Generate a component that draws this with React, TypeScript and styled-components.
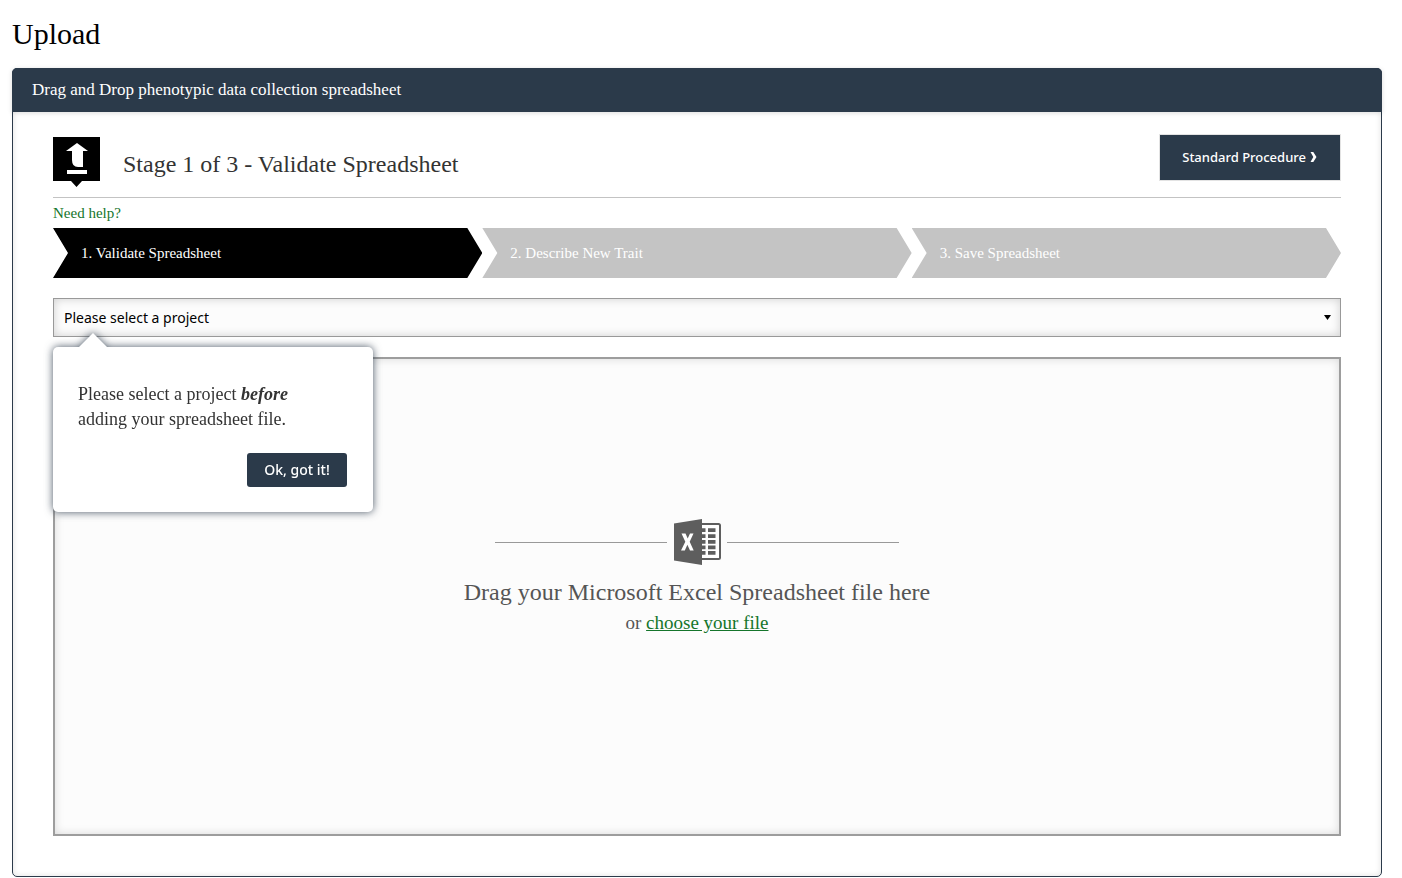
import React, { useState } from "react";
import styled, { createGlobalStyle } from "styled-components";

const serif = `"Liberation Serif", "Times New Roman", serif`;
const sans = `"Noto Sans", "Open Sans", sans-serif`;
const navy = "#2b3a4a";
const green = "#15752b";

const GlobalStyle = createGlobalStyle`
  *, *::before, *::after { box-sizing: border-box; }
  body {
    margin: 0;
    background: #fff;
    color: #333;
    font-family: ${serif};
    font-size: 18px;
    line-height: 24px;
  }
`;

const Page = styled.main`
  padding: 16px 20px 1px 12px;
`;

const Title = styled.h1`
  margin: 0 0 16px;
  color: #000;
  font-size: 30px;
  font-weight: 400;
  line-height: 36px;
`;

const Panel = styled.section`
  border: 1px solid ${navy};
  border-radius: 5px;
  box-shadow: inset 0 0 6px rgba(0, 0, 0, 0.12);
`;

const PanelTitle = styled.h2`
  margin: -1px -1px 0;
  padding: 10px 20px;
  border-radius: 5px 5px 0 0;
  background: ${navy};
  box-shadow: 0 1px 5px rgba(0, 0, 0, 0.14);
  color: #fff;
  font-size: 17px;
  font-weight: 400;
  line-height: 24px;
`;

const PanelBody = styled.div`
  padding: 22px 40px 40px;
`;

const StageHeader = styled.header`
  display: flex;
  align-items: flex-start;
  justify-content: space-between;
  height: 64px;
  border-bottom: 1px solid #c3c3c3;
`;

const StageName = styled.div`
  display: flex;
  gap: 23px;
  padding-top: 3px;
`;

const StageTitle = styled.h3`
  margin: 12px 0 0;
  font-size: 24px;
  font-weight: 400;
  line-height: 30px;
`;

const ProcedureButton = styled.button`
  display: flex;
  align-items: center;
  gap: 4px;
  height: 47px;
  padding: 0 23px 2px 22px;
  border: 1px solid #e3e3e3;
  background: ${navy};
  color: #fff;
  font: 500 13px/20px ${sans};
`;

const HelpLink = styled.a`
  display: block;
  width: fit-content;
  padding: 3px 0;
  color: ${green};
  font-size: 15px;
  text-decoration: none;
`;

const Steps = styled.ol`
  display: grid;
  grid-template-columns: repeat(3, 1fr);
  margin: 0 0 20px;
  padding: 0;
  list-style: none;
`;

const Step = styled.li<{ $current?: boolean }>`
  padding: 13px 28px;
  background: ${(p) => (p.$current ? "#000" : "#c4c4c4")};
  clip-path: polygon(0 0, calc(100% - 15px) 0, 100% 50%, calc(100% - 15px) 100%, 0 100%, 15px 50%);
  color: #fff;
  font-size: 15px;
`;

const ProjectField = styled.div`
  display: grid;
  position: relative;
  margin-bottom: 20px;
`;

const ProjectSelect = styled.select`
  appearance: none;
  grid-area: 1 / 1;
  height: 39px;
  padding: 0 30px 0 10px;
  border: 1px solid #999;
  border-radius: 0;
  background: #fcfcfc;
  box-shadow: inset 0 0 10px rgba(0, 0, 0, 0.18);
  color: #000;
  font: 400 14px/20px ${sans};
`;

const SelectArrow = styled.svg`
  grid-area: 1 / 1;
  place-self: center end;
  margin-right: 10px;
  pointer-events: none;
`;

const Tip = styled.div`
  position: absolute;
  top: 49px;
  left: 0;
  z-index: 1;
  width: 320px;
  padding: 35px 26px 25px 25px;
  border-radius: 5px;
  background: #fff;
  filter: drop-shadow(0 0 4px rgba(43, 58, 74, 0.85));

  &::before {
    content: "";
    position: absolute;
    bottom: 100%;
    left: 26px;
    border: 14px solid transparent;
    border-top: 0;
    border-bottom-color: #fff;
  }
`;

const TipText = styled.p`
  margin: 0 0 21px;
  font-size: 18px;
  line-height: 25px;
`;

const Emphasis = styled.em`
  font-weight: 700;
`;

const TipButton = styled.button`
  display: block;
  min-width: 100px;
  height: 34px;
  margin-left: auto;
  padding: 0 16px;
  border: 0;
  border-radius: 3px;
  background: ${navy};
  color: #fff;
  font: 500 14px/20px ${sans};
`;

const DropZone = styled.div`
  display: flex;
  flex-direction: column;
  align-items: center;
  padding: 160px 20px 199px;
  border: 2px solid #9d9d9d;
  background: #fcfcfc;
  box-shadow: inset 0 0 10px rgba(0, 0, 0, 0.14);
  color: #555;
`;

const IconRule = styled.div`
  display: flex;
  align-items: center;
  gap: 6px;
  margin-bottom: 11px;

  &::before,
  &::after {
    content: "";
    width: 172px;
    border-top: 1px solid #999;
  }
`;

const DropTitle = styled.p`
  margin: 0;
  font-size: 24px;
  line-height: 30px;
`;

const DropHint = styled.p`
  margin: 4px 0 0;
  font-size: 19px;
`;

const FileLink = styled.a`
  color: ${green};
`;

const UploadIcon = () => (
  <svg width="47" height="50" viewBox="0 0 47 50" aria-hidden="true">
    <path d="M0 0H47V44H29L23.500 50L18 44H0Z" fill="#000" />
    <path d="M24 6L35 14H30V30H25Q19 30 19 23V14H13Z" fill="#fff" />
    <path d="M14 33H34V37H14Z" fill="#fff" />
  </svg>
);

const Chevron = () => (
  <svg width="7" height="10" viewBox="0 0 7 10" aria-hidden="true">
    <path d="M0.500 0H3.300L6.500 5L3.300 10H0.500L3.300 5Z" fill="#fff" />
  </svg>
);

const SpreadsheetIcon = () => (
  <svg width="48" height="47" viewBox="0 0 48 47" aria-hidden="true">
    <rect x="24" y="5" width="23" height="35" rx="1.500" fill="#fff" stroke="#5e5e5e" strokeWidth="2" />
    <path
      d="M28 9.300h4.500v3.700h-4.500zM35 9.300h7.500v3.700h-7.500zM28 15.300h4.500v3.700h-4.500zM35 15.300h7.500v3.700h-7.500zM28 21h4.500v3.700h-4.500zM35 21h7.500v3.700h-7.500zM28 26.500h4.500v3.700h-4.500zM35 26.500h7.500v3.700h-7.500zM28 32h4.500v3.700h-4.500zM35 32h7.500v3.700h-7.500z"
      fill="#5e5e5e"
    />
    <path d="M1 4.500L29 0V46L1 41.500Z" fill="#5e5e5e" />
    <path d="M8.500 14.500H12.500L14.700 19.500L17 14.500H20.500L16.700 22.800L20.700 31.500H17L14.400 25.800L11.800 31.500H8L12.300 22.800Z" fill="#fff" />
  </svg>
);

export default function App() {
  const [tipOpen, setTipOpen] = useState(true);

  return (
    <>
      <GlobalStyle />
      <Page>
        <Title>Upload</Title>
        <Panel>
          <PanelTitle>Drag and Drop phenotypic data collection spreadsheet</PanelTitle>
          <PanelBody>
            <StageHeader>
              <StageName>
                <UploadIcon />
                <StageTitle>Stage 1 of 3 - Validate Spreadsheet</StageTitle>
              </StageName>
              <ProcedureButton type="button">
                Standard Procedure
                <Chevron />
              </ProcedureButton>
            </StageHeader>
            <HelpLink href="#help">Need help?</HelpLink>
            <Steps>
              <Step $current aria-current="step">1. Validate Spreadsheet</Step>
              <Step>2. Describe New Trait</Step>
              <Step>3. Save Spreadsheet</Step>
            </Steps>
            <ProjectField>
              <ProjectSelect aria-label="Project">
                <option>Please select a project</option>
              </ProjectSelect>
              <SelectArrow width="7" height="5" viewBox="0 0 7 5" aria-hidden="true">
                <path d="M0 0H7L3.500 5Z" fill="#000" />
              </SelectArrow>
              {tipOpen && (
                <Tip role="dialog" aria-label="Project reminder">
                  <TipText>
                    Please select a project <Emphasis>before</Emphasis>
                    <br />
                    adding your spreadsheet file.
                  </TipText>
                  <TipButton type="button" onClick={() => setTipOpen(false)}>Ok, got it!</TipButton>
                </Tip>
              )}
            </ProjectField>
            <DropZone>
              <IconRule>
                <SpreadsheetIcon />
              </IconRule>
              <DropTitle>Drag your Microsoft Excel Spreadsheet file here</DropTitle>
              <DropHint>
                or <FileLink href="#choose">choose your file</FileLink>
              </DropHint>
            </DropZone>
          </PanelBody>
        </Panel>
      </Page>
    </>
  );
}
